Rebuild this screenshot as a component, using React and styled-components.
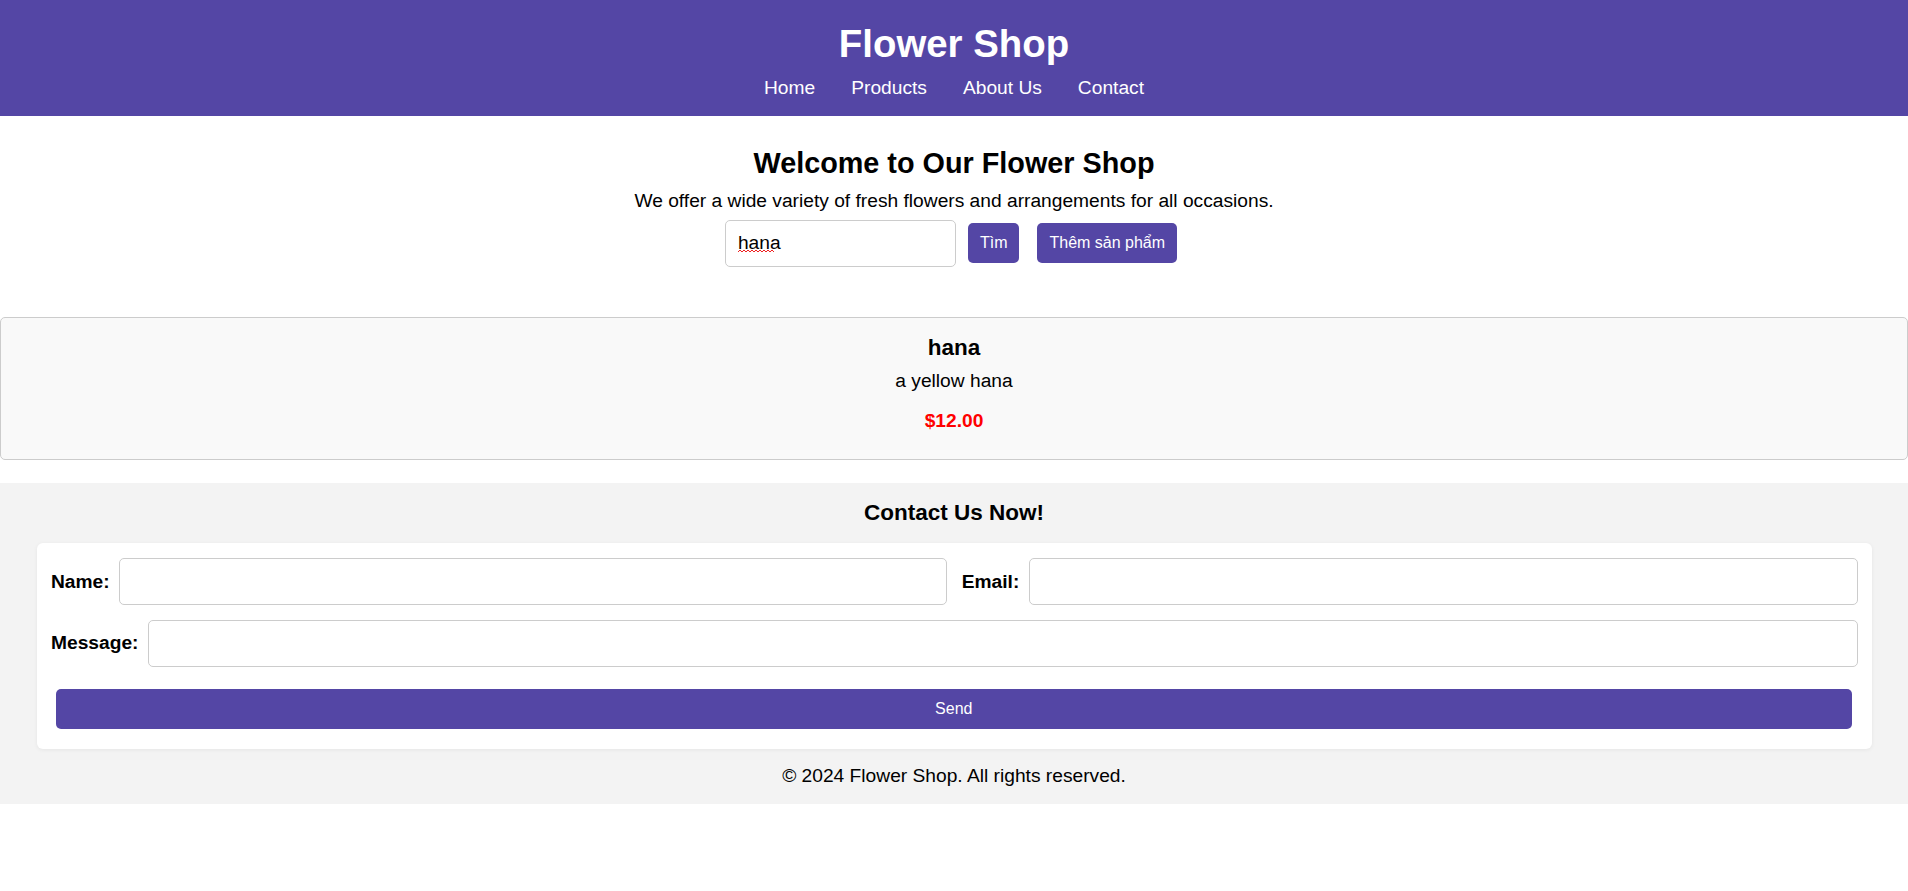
import React from "react";
import styled, { createGlobalStyle } from "styled-components";

const GlobalStyle = createGlobalStyle`
  html, body {
    margin: 0;
    padding: 0;
    background: #ffffff;
  }
  body {
    font-family: "Liberation Sans", Arial, sans-serif;
    font-size: 19.2px;
    color: #000;
  }
  * { box-sizing: border-box; }
`;

const PURPLE = "#5446a5";

const Header = styled.header`
  background: ${PURPLE};
  color: #fff;
  text-align: center;
  padding: 21.6px 0 16.8px;
`;

const Title = styled.h1`
  margin: 0 0 11.6px;
  font-size: 38.4px;
  line-height: 44px;
  font-weight: 700;
`;

const Nav = styled.nav`
  display: flex;
  justify-content: center;
  gap: 36px;
`;

const NavLink = styled.a`
  color: #fff;
  text-decoration: none;
  font-size: 19.2px;
  line-height: 22px;
`;

const Main = styled.main`
  text-align: center;
  padding-top: 31.4px;
`;

const Heading = styled.h2`
  margin: 0 0 10px;
  font-size: 28.8px;
  line-height: 33px;
  font-weight: 700;
`;

const Intro = styled.p`
  margin: 0 0 7.2px;
  font-size: 19.2px;
  line-height: 22px;
`;

const SearchRow = styled.div`
  display: flex;
  justify-content: center;
  align-items: center;
  padding-right: 6px;
`;

const InputWrap = styled.div`
  position: relative;
  display: flex;
`;

const SearchInput = styled.input`
  width: 231px;
  height: 47px;
  border: 1px solid #ccc;
  border-radius: 5px;
  padding: 0 12px;
  font-family: inherit;
  font-size: 19.2px;
  color: #000;
  background: #fff;
  outline: none;
`;

const Squiggle = styled.svg`
  position: absolute;
  left: 13px;
  top: 29px;
  width: 37px;
  height: 4px;
  pointer-events: none;
`;

const ActionButton = styled.button`
  height: 40px;
  padding: 0 12px;
  margin-left: ${(p) => p.$gap}px;
  background: ${PURPLE};
  color: #fff;
  border: none;
  border-radius: 5px;
  font-family: inherit;
  font-size: 16px;
  cursor: pointer;
`;

const ProductCard = styled.div`
  margin-top: 50.8px;
  background: #f9f9f9;
  border: 1px solid #ccc;
  border-radius: 5px;
  padding: 16.6px 16px 26.7px;
  text-align: center;
`;

const ProductName = styled.h3`
  margin: 0 0 9px;
  font-size: 22.5px;
  line-height: 26px;
  font-weight: 700;
`;

const ProductDesc = styled.p`
  margin: 0 0 18px;
  font-size: 19.2px;
  line-height: 22px;
`;

const ProductPrice = styled.p`
  margin: 0;
  color: #ff0000;
  font-weight: 700;
  font-size: 19.2px;
  line-height: 22px;
`;

const ContactSection = styled.section`
  margin-top: 23.1px;
  background: #f3f3f3;
  padding: 17.7px 36.5px 17.5px;
  text-align: center;
`;

const ContactTitle = styled.h3`
  margin: 0 0 16.3px;
  font-size: 22.5px;
  line-height: 26px;
  font-weight: 700;
`;

const FormCard = styled.form`
  background: #fff;
  border-radius: 6px;
  box-shadow: 0 1px 4px rgba(0, 0, 0, 0.06);
  padding: 15.6px 14px 20.8px 14.5px;
  display: flex;
  flex-direction: column;
  gap: 14.4px;
  text-align: left;
`;

const FormRow = styled.div`
  display: flex;
  align-items: center;
  gap: 15px;
`;

const Field = styled.div`
  flex: 1;
  display: flex;
  align-items: center;
  gap: 9.6px;
  min-width: 0;
`;

const Label = styled.label`
  font-weight: 700;
  font-size: 19.2px;
  line-height: 22px;
  white-space: nowrap;
`;

const TextField = styled.input`
  flex: 1;
  min-width: 0;
  height: 47px;
  border: 1px solid #ccc;
  border-radius: 5px;
  padding: 0 12px;
  font-family: inherit;
  font-size: 19.2px;
  background: #fff;
`;

const SendButton = styled.button`
  margin: 7.6px 6px 0 5px;
  height: 40px;
  background: ${PURPLE};
  color: #fff;
  border: none;
  border-radius: 5px;
  font-family: inherit;
  font-size: 16px;
  cursor: pointer;
`;

const FooterText = styled.p`
  margin: 15.3px 0 0;
  font-size: 19.2px;
  line-height: 22px;
`;

export default function App() {
  return (
    <>
      <GlobalStyle />
      <Header>
        <Title>Flower Shop</Title>
        <Nav>
          <NavLink href="#">Home</NavLink>
          <NavLink href="#">Products</NavLink>
          <NavLink href="#">About Us</NavLink>
          <NavLink href="#">Contact</NavLink>
        </Nav>
      </Header>
      <Main>
        <Heading>Welcome to Our Flower Shop</Heading>
        <Intro>
          We offer a wide variety of fresh flowers and arrangements for all
          occasions.
        </Intro>
        <SearchRow>
          <InputWrap>
            <SearchInput defaultValue="hana" spellCheck={false} />
            <Squiggle viewBox="0 0 37 4" aria-hidden="true">
              <path
                d="M0 3 L2 1 L4 3 L6 1 L8 3 L10 1 L12 3 L14 1 L16 3 L18 1 L20 3 L22 1 L24 3 L26 1 L28 3 L30 1 L32 3 L34 1 L36 3"
                fill="none"
                stroke="#e22"
                strokeWidth="1"
              />
            </Squiggle>
          </InputWrap>
          <ActionButton $gap={12}>Tìm</ActionButton>
          <ActionButton $gap={18}>Thêm sản phẩm</ActionButton>
        </SearchRow>
        <ProductCard>
          <ProductName>hana</ProductName>
          <ProductDesc>a yellow hana</ProductDesc>
          <ProductPrice>$12.00</ProductPrice>
        </ProductCard>
      </Main>
      <ContactSection>
        <ContactTitle>Contact Us Now!</ContactTitle>
        <FormCard onSubmit={(e) => e.preventDefault()}>
          <FormRow>
            <Field>
              <Label>Name:</Label>
              <TextField />
            </Field>
            <Field>
              <Label>Email:</Label>
              <TextField />
            </Field>
          </FormRow>
          <FormRow>
            <Field>
              <Label>Message:</Label>
              <TextField />
            </Field>
          </FormRow>
          <SendButton type="submit">Send</SendButton>
        </FormCard>
        <FooterText>© 2024 Flower Shop. All rights reserved.</FooterText>
      </ContactSection>
    </>
  );
}
